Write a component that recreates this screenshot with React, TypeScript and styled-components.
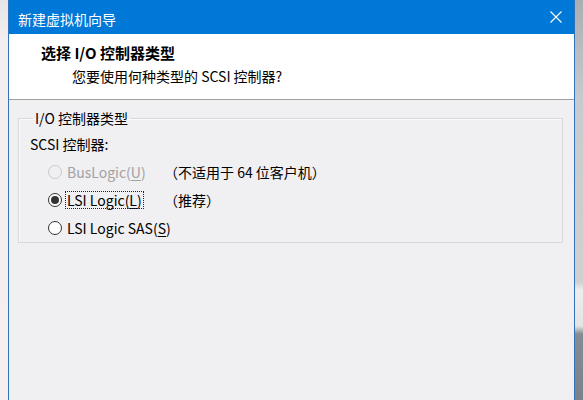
import React from 'react';
import styled, { createGlobalStyle } from 'styled-components';

const GlobalStyle = createGlobalStyle`
  html,
  body {
    margin: 0;
    padding: 0;
    overflow: hidden;
  }

  body {
    font-family: 'Microsoft YaHei', 'Noto Sans CJK SC', 'Noto Sans', sans-serif;
    font-size: 14px;
    color: #000;
  }
`;

const Desktop = styled.div`
  display: flex;
  width: 583px;
  height: 400px;
  overflow: hidden;
`;

const EdgeStrip = styled.div<{ $side: 'left' | 'right' }>`
  flex: 0 0 8px;
  background: ${({ $side }) =>
    $side === 'left'
      ? 'linear-gradient(to bottom, #e6e6e8 0, #f4eef0 40px, #f6eef1 100%)'
      : 'linear-gradient(to bottom, #a9aeb3 0, #c9cacd 100px, #d0d0d2 282px, #ededed 290px, #e4e4e4 326px, #868c94 334px, #7c828a 100%)'};
`;

const Window = styled.div`
  flex: 1;
  display: flex;
  flex-direction: column;
  border-left: 1px solid #2f73b8;
  border-right: 1px solid #2f73b8;
  background: #f0eff2;
`;

const TitleBar = styled.div`
  display: flex;
  align-items: center;
  justify-content: space-between;
  height: 34px;
  padding: 4px 0 0 9px;
  box-sizing: border-box;
  background: #0078d7;
  color: #fff;
`;

const TitleText = styled.span`
  font-size: 14px;
  line-height: 20px;
`;

const CloseButton = styled.div`
  display: flex;
  align-items: center;
  justify-content: center;
  width: 46px;
  height: 32px;
  margin-right: -5px;
  margin-top: -5px;
`;

const Header = styled.div`
  display: flex;
  flex-direction: column;
  gap: 3px;
  padding: 9px 0 13px;
  background: #fff;
  border-bottom: 1px solid #a0a0a0;
`;

const HeaderTitle = styled.div`
  padding-left: 32px;
  font-size: 15px;
  font-weight: bold;
  line-height: 20px;
`;

const HeaderSubtitle = styled.div`
  padding-left: 63px;
  font-size: 14px;
  line-height: 20px;
`;

const Body = styled.div`
  flex: 1;
  padding: 9px 11px 0 9px;
`;

const GroupBox = styled.fieldset`
  margin: 0;
  padding: 7px 0 4px 11px;
  border: 1px solid #d8d8d8;
  border-radius: 0;
  box-shadow: inset 1px 1px 0 #fbfbfb;
`;

const GroupLegend = styled.legend`
  margin-left: 3px;
  padding: 0 2px;
  font-size: 14px;
  line-height: 18px;
`;

const FieldLabel = styled.div`
  line-height: 20px;
`;

const OptionList = styled.div`
  display: grid;
  grid-template-columns: 116px auto;
  row-gap: 8px;
  margin: 8px 0 0 18px;
`;

const RadioLabel = styled.label<{ $disabled?: boolean }>`
  display: flex;
  align-items: center;
  gap: 5px;
  height: 20px;
  color: ${({ $disabled }) => ($disabled ? '#a2a2a2' : '#000')};
  white-space: nowrap;
`;

const RadioDot = styled.span<{ $checked?: boolean; $disabled?: boolean }>`
  position: relative;
  flex: 0 0 14px;
  width: 14px;
  height: 14px;
  box-sizing: border-box;
  border-radius: 50%;
  border: 1px solid ${({ $disabled }) => ($disabled ? '#cbcbcb' : '#333')};
  background: ${({ $disabled }) => ($disabled ? '#f0eff2' : '#fff')};

  &::after {
    content: '';
    display: ${({ $checked }) => ($checked ? 'block' : 'none')};
    position: absolute;
    left: 2px;
    top: 2px;
    width: 8px;
    height: 8px;
    border-radius: 50%;
    background: #333;
  }
`;

const OptionText = styled.span<{ $focused?: boolean }>`
  line-height: 16px;
  padding: 0 1px;
  margin-left: -1px;
  outline: ${({ $focused }) => ($focused ? '1px dotted #222' : 'none')};
  outline-offset: 0;
`;

const AccessKey = styled.u`
  text-underline-offset: 2px;
`;

const Note = styled.span`
  display: flex;
  align-items: center;
  height: 20px;
  white-space: nowrap;
`;

interface Option {
  name: string;
  key: string;
  note?: string;
  checked?: boolean;
  disabled?: boolean;
}

const options: Option[] = [
  { name: 'BusLogic', key: 'U', note: '（不适用于 64 位客户机）', disabled: true },
  { name: 'LSI Logic', key: 'L', note: '（推荐）', checked: true },
  { name: 'LSI Logic SAS', key: 'S' },
];

const CloseIcon = () => (
  <svg width="12" height="12" viewBox="0 0 12 12">
    <path d="M0.5 0.5 L11.5 11.5 M11.5 0.5 L0.5 11.5" stroke="#fff" strokeWidth="1.1" />
  </svg>
);

export default function App() {
  return (
    <>
      <GlobalStyle />
      <Desktop>
        <EdgeStrip $side="left" />
        <Window>
          <TitleBar>
            <TitleText>新建虚拟机向导</TitleText>
            <CloseButton>
              <CloseIcon />
            </CloseButton>
          </TitleBar>
          <Header>
            <HeaderTitle>选择 I/O 控制器类型</HeaderTitle>
            <HeaderSubtitle>您要使用何种类型的 SCSI 控制器?</HeaderSubtitle>
          </Header>
          <Body>
            <GroupBox>
              <GroupLegend>I/O 控制器类型</GroupLegend>
              <FieldLabel>SCSI 控制器:</FieldLabel>
              <OptionList>
                {options.map((opt) => (
                  <React.Fragment key={opt.name}>
                    <RadioLabel $disabled={opt.disabled}>
                      <RadioDot $checked={opt.checked} $disabled={opt.disabled} />
                      <OptionText $focused={opt.checked}>
                        {opt.name}(<AccessKey>{opt.key}</AccessKey>)
                      </OptionText>
                    </RadioLabel>
                    <Note>{opt.note ?? ''}</Note>
                  </React.Fragment>
                ))}
              </OptionList>
            </GroupBox>
          </Body>
        </Window>
        <EdgeStrip $side="right" />
      </Desktop>
    </>
  );
}
